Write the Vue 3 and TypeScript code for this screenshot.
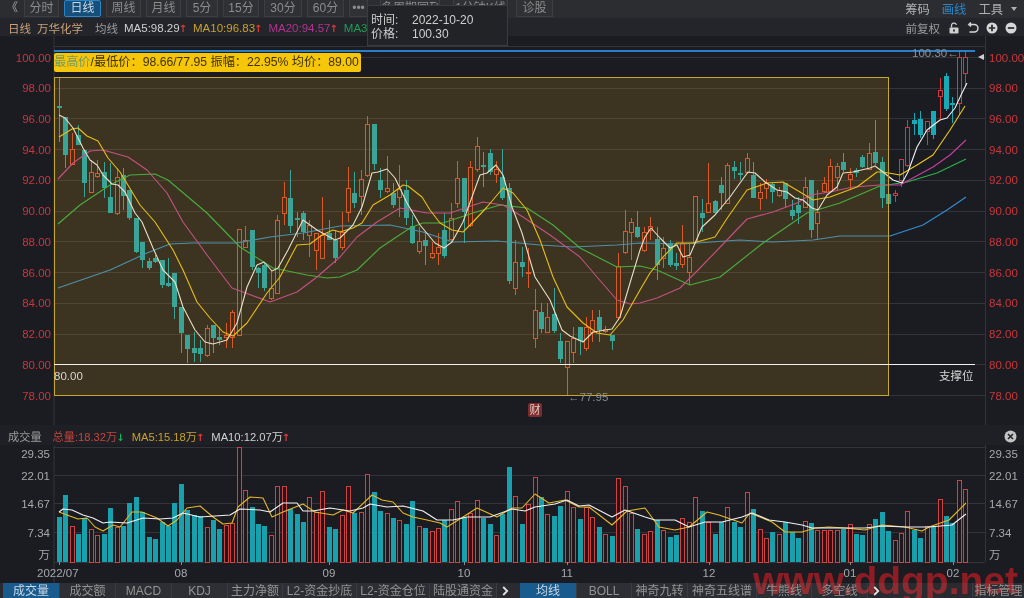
<script setup lang="ts">
interface ToolTab {
  label: string
  width: number
  gap?: number
  active?: boolean
}

// candle rows: body top, body bottom, high, low (all page y), 1 = rising
type Candle = [number, number, number, number, number]

const toolTabs: ToolTab[] = [
  { label: '分时', width: 35 },
  { label: '日线', width: 37, active: true },
  { label: '周线', width: 35 },
  { label: '月线', width: 35 },
  { label: '5分', width: 32 },
  { label: '15分', width: 36 },
  { label: '30分', width: 38 },
  { label: '60分', width: 37 },
  { label: '•••', width: 19 },
  { label: '多周期同列', width: 60, gap: 7 },
  { label: '1分钟K线', width: 55, gap: 8 },
  { label: '诊股', width: 37, gap: 3 },
]

const leftTabs = [
  { label: '成交量', width: 57, active: true },
  { label: '成交额', width: 56 },
  { label: 'MACD', width: 56 },
  { label: 'KDJ', width: 56 },
  { label: '主力净额', width: 55 },
  { label: 'L2-资金抄底', width: 74 },
  { label: 'L2-资金仓位', width: 73 },
  { label: '陆股通资金', width: 67 },
]

const rightTabs = [
  { label: '均线', width: 57, active: true },
  { label: 'BOLL', width: 55 },
  { label: '神奇九转', width: 56 },
  { label: '神奇五线谱', width: 69 },
  { label: '牛熊线', width: 55 },
  { label: '多空线', width: 56 },
]

const candles: Candle[] = [
  [106,108,77,142,0],[117,155,117,168,0],[149,164,133,165,1],[135,145,125,145,0],[150,183,150,197,0],
  [172,192,160,192,1],[173,176,160,178,1],[172,188,162,198,0],[197,213,163,213,0],[177,213,168,215,1],
  [175,196,168,210,0],[190,218,190,220,0],[218,252,218,253,0],[242,260,242,268,0],[261,268,258,270,0],
  [258,262,255,263,0],[260,285,260,288,0],[283,286,258,287,0],[273,307,273,319,0],[307,333,307,353,0],
  [335,349,335,363,0],[348,353,332,362,0],[348,354,340,362,0],[328,355,325,357,1],[325,338,325,353,0],
  [337,340,327,345,0],[335,337,323,348,1],[312,337,310,348,1],[229,335,229,336,1],[240,247,226,247,1],
  [230,267,230,270,0],[268,273,267,288,0],[265,288,262,291,0],[288,298,270,300,1],[220,293,215,293,1],
  [197,213,182,225,1],[198,226,170,233,0],[218,219,212,237,0],[213,232,211,240,0],[225,235,220,257,1],
  [233,250,233,270,1],[235,258,197,258,1],[233,240,220,240,0],[240,258,230,263,0],[232,247,212,250,1],
  [188,212,167,222,1],[193,203,172,208,0],[179,196,170,215,1],[124,175,116,177,1],[124,164,124,170,0],
  [180,190,168,198,0],[188,191,156,193,1],[193,205,183,208,0],[189,197,165,217,1],[190,218,180,225,0],
  [226,243,215,244,0],[241,251,227,254,1],[240,246,233,265,0],[253,257,242,259,1],[247,253,233,265,1],
  [230,256,213,258,0],[218,239,203,241,1],[178,203,161,208,1],[178,212,178,243,0],[167,225,161,227,1],
  [146,169,137,172,1],[165,166,152,187,0],[153,172,149,175,0],[169,174,161,183,1],[177,198,149,200,0],
  [188,281,183,284,0],[262,288,240,295,1],[262,267,247,277,0],[272,273,248,288,1],[310,338,289,348,1],
  [312,329,303,333,0],[317,332,303,333,1],[314,331,288,333,0],[341,359,333,363,0],[341,367,341,395,1],
  [338,352,327,363,1],[327,341,327,355,0],[327,348,317,351,1],[320,332,310,342,1],[317,330,310,342,0],
  [329,331,326,333,1],[335,341,335,350,0],[266,317,253,320,1],[231,252,210,254,1],[222,232,218,260,1],
  [227,237,211,238,0],[232,250,227,252,1],[226,230,217,240,1],[239,265,227,280,0],[248,258,237,268,1],
  [243,265,240,267,0],[263,266,253,270,0],[243,264,225,268,1],[257,272,243,285,1],[196,242,196,244,1],
  [213,218,199,232,0],[203,212,163,213,1],[201,213,200,215,0],[185,193,177,210,0],[165,203,163,204,1],
  [167,171,161,179,0],[173,174,162,180,0],[158,172,153,174,1],[175,198,162,198,0],[192,198,183,210,1],
  [183,188,179,199,1],[184,192,182,203,0],[190,195,187,197,1],[183,199,183,207,0],[210,216,200,220,0],
  [205,213,197,224,0],[187,207,177,208,1],[180,230,180,238,0],[212,223,190,240,1],[183,191,177,193,1],
  [166,191,159,192,1],[166,177,163,190,1],[162,170,153,172,0],[174,179,168,190,1],[170,173,168,177,0],
  [157,167,155,168,0],[153,169,143,170,1],[152,163,120,165,0],[162,198,157,208,0],[194,204,194,207,0],
  [193,195,190,202,1],[159,180,159,187,1],[127,165,120,167,1],[120,124,113,135,0],[119,135,111,138,0],
  [121,131,121,145,1],[111,135,111,139,0],[90,96,78,120,1],[76,109,73,111,0],[103,104,97,123,0],
  [57,103,50,115,1],[57,73,51,87,1],
]

// volume bar tops, measured in thirds of a pixel below y=420
const volumeTops = [
  290,225,318,342,295,327,345,342,263,320,318,250,230,275,352,357,305,318,250,193,
  270,285,288,320,300,328,315,310,82,210,260,313,317,345,197,198,268,283,307,230,
  275,213,320,328,285,197,280,275,163,217,273,280,295,300,312,243,318,325,333,325,
  300,268,243,290,280,240,293,313,345,283,140,227,312,253,172,232,283,288,258,213,
  260,298,260,290,320,342,348,175,197,280,328,342,333,300,330,350,345,295,305,232,
  273,305,342,305,260,305,320,217,268,328,353,337,342,305,335,353,303,310,330,330,
  330,330,328,313,342,345,313,298,277,333,360,340,273,330,353,318,318,238,287,310,
  180,208,
]

const ma5 = '59,115 65,118 73,128 83,148 90,160 97,165 103,175 112,184 118,185 125,192 135,213 142,222 153,248 163,270 175,282 183,307 195,330 205,342 213,344 227,340 237,323 247,287 257,265 264,262 272,271 278,268 288,250 303,220 317,230 335,240 340,238 353,225 362,207 372,173 378,172 387,169 395,178 407,203 420,225 435,243 444,248 452,242 463,222 472,197 480,175 487,173 496,165 503,175 512,207 522,233 535,277 550,300 562,330 570,336 583,342 593,332 612,329 620,317 630,283 640,250 645,237 651,228 660,238 670,248 677,245 683,257 690,255 702,227 715,215 730,197 740,183 748,172 755,173 765,182 777,190 787,192 795,198 803,200 812,208 818,210 827,195 837,187 843,173 853,172 870,168 875,166 883,172 893,180 902,183 908,172 917,147 927,130 940,120 947,118 955,108 962,93 967,83'
const ma10 = '59,137 72,129 78,128 87,136 98,141 108,158 120,172 140,205 155,222 173,250 183,270 197,302 210,318 223,332 233,336 247,323 267,293 280,277 297,245 310,244 322,235 333,230 340,232 353,228 362,223 373,205 390,195 403,185 408,186 422,197 430,210 440,223 452,230 463,232 473,222 487,207 503,188 513,193 527,210 540,240 553,277 567,307 583,323 597,333 610,335 623,320 640,290 650,273 663,257 677,243 693,243 715,237 728,217 747,190 767,183 783,182 800,192 813,200 830,197 857,187 877,172 883,172 900,175 917,165 933,155 950,130 965,106'
const ma20 = '58,179 73,163 90,151 103,150 128,157 147,170 167,193 183,222 207,255 232,288 243,292 270,302 297,292 317,277 340,257 357,237 377,222 400,208 427,213 450,213 483,202 503,205 523,217 550,235 580,257 597,277 617,300 630,304 640,303 657,298 680,288 700,268 727,240 747,219 773,212 797,203 810,195 830,192 853,187 880,185 900,185 933,167 950,155 966,140'
const ma30 = '58,224 80,205 110,185 130,175 155,174 168,180 207,213 240,247 273,268 307,275 327,278 340,277 357,270 380,248 410,228 423,223 443,223 473,213 500,205 527,208 553,225 580,248 617,267 640,266 657,270 690,285 720,277 763,243 807,213 840,203 880,186 907,182 937,173 966,159'
const ma60 = '58,288 110,270 147,253 170,244 193,243 237,243 270,237 303,233 340,226 390,225 423,232 453,242 497,241 540,245 573,247 617,245 640,243 683,244 740,240 773,242 813,240 840,236 890,236 923,225 947,210 966,197'

const volWhite = '59,512 63,509 72,510 83,515 93,518 103,523 110,522 127,523 143,518 160,519 173,518 183,513 200,517 230,515 240,509 260,510 270,512 283,503 297,503 303,511 313,511 330,508 343,510 350,511 363,508 370,504 387,507 403,506 423,511 437,520 453,520 467,517 490,517 512,509 525,511 535,507 555,504 567,500 579,506 589,505 612,517 625,510 645,517 655,520 675,520 689,527 705,522 722,522 742,517 752,513 769,520 785,522 802,525 812,528 845,528 865,528 882,526 905,527 929,527 952,525 966,514'
const volYellow = '59,512 67,515 78,519 87,518 95,527 103,531 113,525 120,527 132,512 142,512 157,518 168,526 177,520 187,508 200,506 213,517 223,524 232,523 238,507 250,497 263,498 272,517 283,512 303,504 315,512 333,515 343,510 353,513 372,495 382,500 393,502 403,513 413,517 427,520 440,523 447,527 463,517 477,508 497,517 512,508 522,508 535,494 549,503 565,500 579,507 589,507 612,525 627,511 645,508 659,527 675,530 689,527 707,512 719,515 742,523 750,513 772,522 785,532 802,532 815,528 829,527 845,528 865,530 882,525 905,527 922,531 929,527 949,520 966,503'

const priceLevels = [100, 98, 96, 94, 92, 90, 88, 86, 84, 82, 80, 78]
const volumeLevels = [
  { label: '29.35', y: 454 },
  { label: '22.01', y: 476 },
  { label: '14.67', y: 504 },
  { label: '7.34', y: 533 },
  { label: '万', y: 555 },
]
const volumeGrid = [447, 475, 503, 532, 562]
const monthTicks = [
  { label: '2022/07', x: 59 },
  { label: '08', x: 181 },
  { label: '09', x: 329 },
  { label: '10', x: 464 },
  { label: '11', x: 567 },
  { label: '12', x: 709 },
  { label: '01', x: 850 },
  { label: '02', x: 953 },
]

const priceY = (level: number) => 57 + (100 - level) * 15.37
const candleX = (i: number) => Math.round(58.7 + i * 6.43)
const volumeY = (top: number) => Math.round(420 + top / 3)

function wickPath(c: Candle, x: number) {
  return `M${x + 0.5} ${c[2]}V${c[0]}M${x + 0.5} ${c[1]}V${c[3]}`
}

function upClass(i: number, part: string) {
  return candleX(i) < 889 ? `${part}-up in-box` : `${part}-up`
}
</script>

<template>
  <div class="screen">
    <header class="toolbar">
      <span class="back">《</span>
      <div class="tool-tabs">
        <button
          v-for="tab in toolTabs"
          :key="tab.label"
          class="tool-tab"
          :class="{ active: tab.active }"
          :style="{ width: tab.width + 'px', marginLeft: (tab.gap ?? 0) + 'px' }"
        >
          {{ tab.label }}
        </button>
      </div>
      <nav class="tool-links">
        <span>筹码</span>
        <span class="on">画线</span>
        <span>工具</span>
        <i class="caret" />
      </nav>
    </header>

    <section class="infobar">
      <span class="tan">日线</span>
      <span class="tan name">万华化学</span>
      <span class="mute avg">均线</span>
      <span class="white ma first">MA5:98.29<b>↑</b></span>
      <span class="gold ma">MA10:96.83<b>↑</b></span>
      <span class="pink ma">MA20:94.57<b>↑</b></span>
      <span class="green ma">MA30:92.66<b>↑</b></span>
      <div class="info-right">
        <span class="mute">前复权</span>
        <svg width="12" height="12" viewBox="0 0 12 12"><path d="M3.5 5.5V3.6a2.5 2.5 0 0 1 4.9-.7" fill="none" stroke="#d0d0d0" stroke-width="1.3" /><rect x="1.5" y="5.5" width="9" height="6" rx="1" fill="#d0d0d0" /><rect x="5.2" y="7.4" width="1.6" height="2.2" fill="#24252a" /></svg>
        <svg width="12" height="12" viewBox="0 0 12 12"><path d="M3 2.5h4.2a3.4 3.4 0 0 1 0 7.5H2.5M4 .6 1.8 2.5 4 4.4" fill="none" stroke="#d6d6d6" stroke-width="1.5" /></svg>
        <svg width="12" height="12" viewBox="0 0 12 12"><circle cx="6" cy="6" r="5.5" fill="#d6d6d6" /><path d="M2.8 6h6.4M6 2.8v6.4" stroke="#24252a" stroke-width="1.7" /></svg>
        <svg width="12" height="12" viewBox="0 0 12 12"><circle cx="6" cy="6" r="5.5" fill="#d6d6d6" /><path d="M2.8 6h6.4" stroke="#24252a" stroke-width="1.7" /></svg>
        <svg width="12" height="12" viewBox="0 0 12 12"><circle cx="6" cy="6" r="5.5" fill="#d6d6d6" /></svg>
      </div>
    </section>

    <svg class="plot" width="1024" height="389" viewBox="0 36 1024 389">
      <g class="grid">
        <path d="M54 46.5H985M54 36V425M985.5 36V425" />
        <path v-for="level in priceLevels" :key="level" :d="`M54 ${Math.round(priceY(level)) + 0.5}H985`" />
      </g>

      <g v-for="(c, i) in candles" :key="i">
        <path :d="wickPath(c, candleX(i))" :class="c[4] ? upClass(i, 'wick') : 'wick-down'" />
        <rect
          v-if="c[4]"
          :class="upClass(i, 'body')"
          :x="candleX(i) - 1.5"
          :y="c[0] + 0.5"
          width="4"
          :height="Math.max(c[1] - c[0], 1)"
        />
        <rect
          v-else
          class="body-down"
          :x="candleX(i) - 2"
          :y="c[0]"
          width="5"
          :height="Math.max(c[1] - c[0], 2)"
        />
      </g>

      <polyline class="ma l60" :points="ma60" />
      <polyline class="ma l30" :points="ma30" />
      <polyline class="ma l20" :points="ma20" />
      <polyline class="ma l10" :points="ma10" />
      <polyline class="ma l5" :points="ma5" />

      <rect class="range-box" x="54.5" y="77.5" width="834" height="318" />
      <path class="support" d="M54 364.5H975" />
      <path class="top-line" d="M54 51H975" />
      <path d="M978 57l6-3v6z" fill="#cfcfcf" />

      <text v-for="level in priceLevels" :key="'l' + level" class="axis price" x="51" :y="priceY(level) + 4.5" text-anchor="end">{{ level.toFixed(2) }}</text>
      <text v-for="level in priceLevels" :key="'r' + level" class="axis price" x="989" :y="priceY(level) + 4.5">{{ level.toFixed(2) }}</text>

      <text class="note" x="912" y="57">100.30←</text>
      <text class="note" x="568" y="401">←77.95</text>
      <text class="label" x="54" y="380">80.00</text>
      <text class="label" x="939" y="380">支撑位</text>
    </svg>

    <div class="bar-head">
      <span class="mute">成交量</span>
      <span class="red gap-a">总量:18.32万<b class="down">↓</b></span>
      <span class="gold gap-b">MA5:15.18万<b>↑</b></span>
      <span class="white gap-b">MA10:12.07万<b>↑</b></span>
      <svg class="close" width="13" height="13" viewBox="0 0 13 13"><circle cx="6.5" cy="6.5" r="6" fill="#c4c4c4" /><path d="M4 4l5 5M9 4l-5 5" stroke="#24252a" stroke-width="1.6" /></svg>
    </div>

    <svg class="plot" width="1024" height="138" viewBox="0 445 1024 138">
      <g class="grid">
        <path d="M54 445V583M985.5 445V562" />
        <path v-for="y in volumeGrid" :key="y" :d="`M54 ${y + 0.5}H985`" />
      </g>

      <g v-for="(top, i) in volumeTops" :key="i">
        <rect
          v-if="candles[i][4]"
          class="vol-up"
          :x="candleX(i) - 1.5"
          :y="volumeY(top) + 0.5"
          width="4"
          :height="562 - volumeY(top)"
        />
        <rect
          v-else
          class="vol-down"
          :x="candleX(i) - 2"
          :y="volumeY(top)"
          width="5"
          :height="562 - volumeY(top)"
        />
      </g>

      <polyline class="ma vol-l10" :points="volYellow" />
      <polyline class="ma vol-l5" :points="volWhite" />

      <text v-for="v in volumeLevels" :key="'a' + v.label" class="axis" x="50" :y="v.y + 4" text-anchor="end">{{ v.label }}</text>
      <text v-for="v in volumeLevels" :key="'b' + v.label" class="axis" x="989" :y="v.y + 4">{{ v.label }}</text>
      <g v-for="tick in monthTicks" :key="tick.label">
        <path class="tick" :d="`M${tick.x + 0.5} 562v3`" />
        <text class="axis" :x="tick.x" y="577" :text-anchor="tick.label.length > 2 ? 'start' : 'middle'" :dx="tick.label.length > 2 ? -22 : 0">{{ tick.label }}</text>
      </g>
    </svg>

    <footer class="tabs">
      <button
        v-for="tab in leftTabs"
        :key="tab.label"
        class="tab"
        :class="{ active: tab.active }"
        :style="{ width: tab.width + 'px' }"
      >
        {{ tab.label }}
      </button>
      <span class="more">
        <svg width="7" height="10" viewBox="0 0 7 10"><path d="M1.2 1l4 4-4 4" fill="none" stroke="#e2e2e2" stroke-width="1.8" /></svg>
      </span>
      <button
        v-for="tab in rightTabs"
        :key="tab.label"
        class="tab"
        :class="{ active: tab.active }"
        :style="{ width: tab.width + 'px' }"
      >
        {{ tab.label }}
      </button>
      <span class="more">
        <svg width="7" height="10" viewBox="0 0 7 10"><path d="M1.2 1l4 4-4 4" fill="none" stroke="#e2e2e2" stroke-width="1.8" /></svg>
      </span>
      <button class="tab manage">指标管理</button>
    </footer>

    <div class="tip">
      <div><span>时间:</span>2022-10-20</div>
      <div><span>价格:</span>100.30</div>
    </div>
    <div class="badge">
      <span class="faded">最高价</span>/最低价：98.66/77.95 振幅：22.95% 均价：89.00
    </div>
    <span class="fin">财</span>
    <div class="watermark">www.ddgp.net</div>
  </div>
</template>

<style>
html,
body {
  background: #1b1c22;
}
</style>

<style scoped>
.screen {
  position: relative;
  display: flex;
  flex-direction: column;
  width: 1024px;
  height: 598px;
  overflow: hidden;
  background: #1b1c22;
  font-family: "Liberation Sans", "Noto Sans CJK SC", sans-serif;
  font-size: 11.5px;
  color: #a8a8a8;
}

.toolbar {
  display: flex;
  align-items: flex-start;
  height: 18px;
  padding-left: 6px;
  background: #2c2d31;
}

.back {
  width: 18px;
  font-size: 12px;
  line-height: 16px;
  color: #a0a0a0;
}

.tool-tabs {
  display: flex;
  gap: 5px;
}

button {
  padding: 0;
  border: 0;
  font: inherit;
  white-space: nowrap;
  overflow: hidden;
}

.tool-tab {
  height: 17px;
  border: 1px solid #3d3e43;
  border-top: 0;
  background: #303135;
  font-size: 12px;
  line-height: 16px;
  color: #8c8c8c;
}

.tool-tab.active {
  border: 1px solid #2a84c6;
  border-radius: 2px;
  background: #15507d;
  line-height: 15px;
  color: #c9d6e0;
}

.tool-links {
  display: flex;
  gap: 12px;
  align-items: center;
  margin-left: auto;
  padding-right: 7px;
  height: 18px;
  font-size: 12.3px;
  color: #b0b0b0;
}

.tool-links .on {
  color: #2a86c8;
}

.caret {
  margin-left: -4px;
  border: 3px solid transparent;
  border-top: 4px solid #b0b0b0;
  border-bottom: 0;
}

.infobar {
  display: flex;
  align-items: center;
  height: 18px;
  padding: 2px 0 0 8px;
  box-sizing: border-box;
  background: #24252a;
  white-space: nowrap;
}

.infobar b,
.bar-head b {
  margin: 0 -1px;
  font-family: "DejaVu Sans", sans-serif;
  font-size: 10px;
  color: #e0393a;
}

.bar-head b.down {
  color: #1fae5f;
}

.tan {
  color: #c9a27a;
}

.name {
  margin-left: 6px;
}

.mute {
  color: #9c9c9c;
}

.avg {
  margin-left: 12px;
}

.infobar .ma {
  margin-left: 7px;
}

.infobar .ma.first {
  margin-left: 6px;
}

.white {
  color: #d0d0d0;
}

.gold {
  color: #c8a12c;
}

.pink {
  color: #b2338f;
}

.green {
  color: #1f9d58;
}

.red {
  color: #c6443e;
}

.info-right {
  display: flex;
  align-items: center;
  gap: 7px;
  margin-left: auto;
  margin-right: -12px;
}

.info-right svg:first-of-type {
  margin-left: 1px;
}

.plot {
  display: block;
  flex: none;
}

.grid path {
  fill: none;
  stroke: #33343a;
  stroke-width: 1;
}

.wick-up,
.body-up {
  fill: none;
  stroke: #d6383c;
}

.wick-up.in-box,
.body-up.in-box {
  stroke: #dd4b2c;
}

.wick-down {
  fill: none;
  stroke: #18a9b6;
}

.body-down {
  fill: #18a9b6;
}

polyline.ma {
  fill: none;
  stroke-width: 1.1;
  stroke-linejoin: round;
}

polyline.l5,
polyline.vol-l5 {
  stroke: #f2f2f2;
}

polyline.l10 {
  stroke: #f2c814;
}

polyline.l20 {
  stroke: #c63fa0;
}

polyline.l30 {
  stroke: #2cb34a;
}

polyline.l60 {
  stroke: #2f8fd0;
}

polyline.vol-l10 {
  stroke: #e8b827;
}

.range-box {
  fill: rgba(197, 148, 24, 0.2);
  stroke: #c6a82e;
}

.support {
  stroke: #f0f0f0;
  fill: none;
}

.top-line {
  stroke: #2c7fc4;
  stroke-width: 2;
  fill: none;
}

.axis {
  font-size: 11.5px;
  fill: #a8a8a8;
}

.axis.price {
  fill: #c9363b;
}

.note {
  font-size: 11.5px;
  fill: #8e8e8e;
}

.label {
  font-size: 11.5px;
  fill: #d6d6d6;
}

.tick {
  stroke: #8a8a8a;
}

.vol-up {
  fill: #23171c;
  stroke: #cc4444;
}

.vol-down {
  fill: #18a0ad;
}

.bar-head {
  display: flex;
  align-items: center;
  flex: none;
  height: 20px;
  padding: 2px 7px 0 8px;
  box-sizing: border-box;
  background: #1f2025;
  font-size: 11.2px;
  white-space: nowrap;
}

.gap-a {
  margin-left: 11px;
}

.gap-b {
  margin-left: 8px;
}

.close {
  margin-left: auto;
}

.tabs {
  display: flex;
  align-items: center;
  flex: none;
  height: 15px;
  padding-left: 3px;
  background: #2a2b30;
  font-size: 12px;
  white-space: nowrap;
}

.tab {
  height: 15px;
  border-right: 1px solid #3b3c42;
  background: #2e2f34;
  line-height: 17px;
  color: #939393;
  font-size: 12px;
}

.tab.active {
  background: #1a5b8e;
  color: #c8d8e4;
}

.more {
  display: flex;
  align-items: center;
  width: 23px;
  height: 15px;
  padding-left: 5px;
  box-sizing: border-box;
}

.manage {
  width: 52px;
  margin-left: auto;
  border-right: 0;
  border-left: 1px solid #3b3c42;
}

.tip {
  position: absolute;
  left: 367px;
  top: 5px;
  width: 141px;
  height: 41px;
  box-sizing: border-box;
  padding: 7px 0 0 3px;
  border: 1px solid #3a3b40;
  background: #222327;
  font-size: 12px;
  line-height: 14px;
  color: #cfcfcf;
}

.tip span {
  display: inline-block;
  width: 41px;
}

.badge {
  position: absolute;
  left: 54px;
  top: 53px;
  width: 307px;
  height: 19px;
  border-radius: 2px;
  background: #f6c609;
  font-size: 12.2px;
  line-height: 19px;
  color: #3f3208;
  white-space: nowrap;
}

.faded {
  color: #6f9a6c;
}

.fin {
  position: absolute;
  left: 528px;
  top: 403px;
  width: 14px;
  height: 14px;
  border-radius: 2px;
  background: #7d2b2d;
  font-size: 11px;
  line-height: 14px;
  text-align: center;
  color: #e6c9c4;
}

.watermark {
  position: absolute;
  left: 753px;
  top: 558px;
  font-size: 39px;
  font-weight: 700;
  line-height: 46px;
  color: #8e1519;
  mix-blend-mode: lighten;
  white-space: nowrap;
}
</style>
